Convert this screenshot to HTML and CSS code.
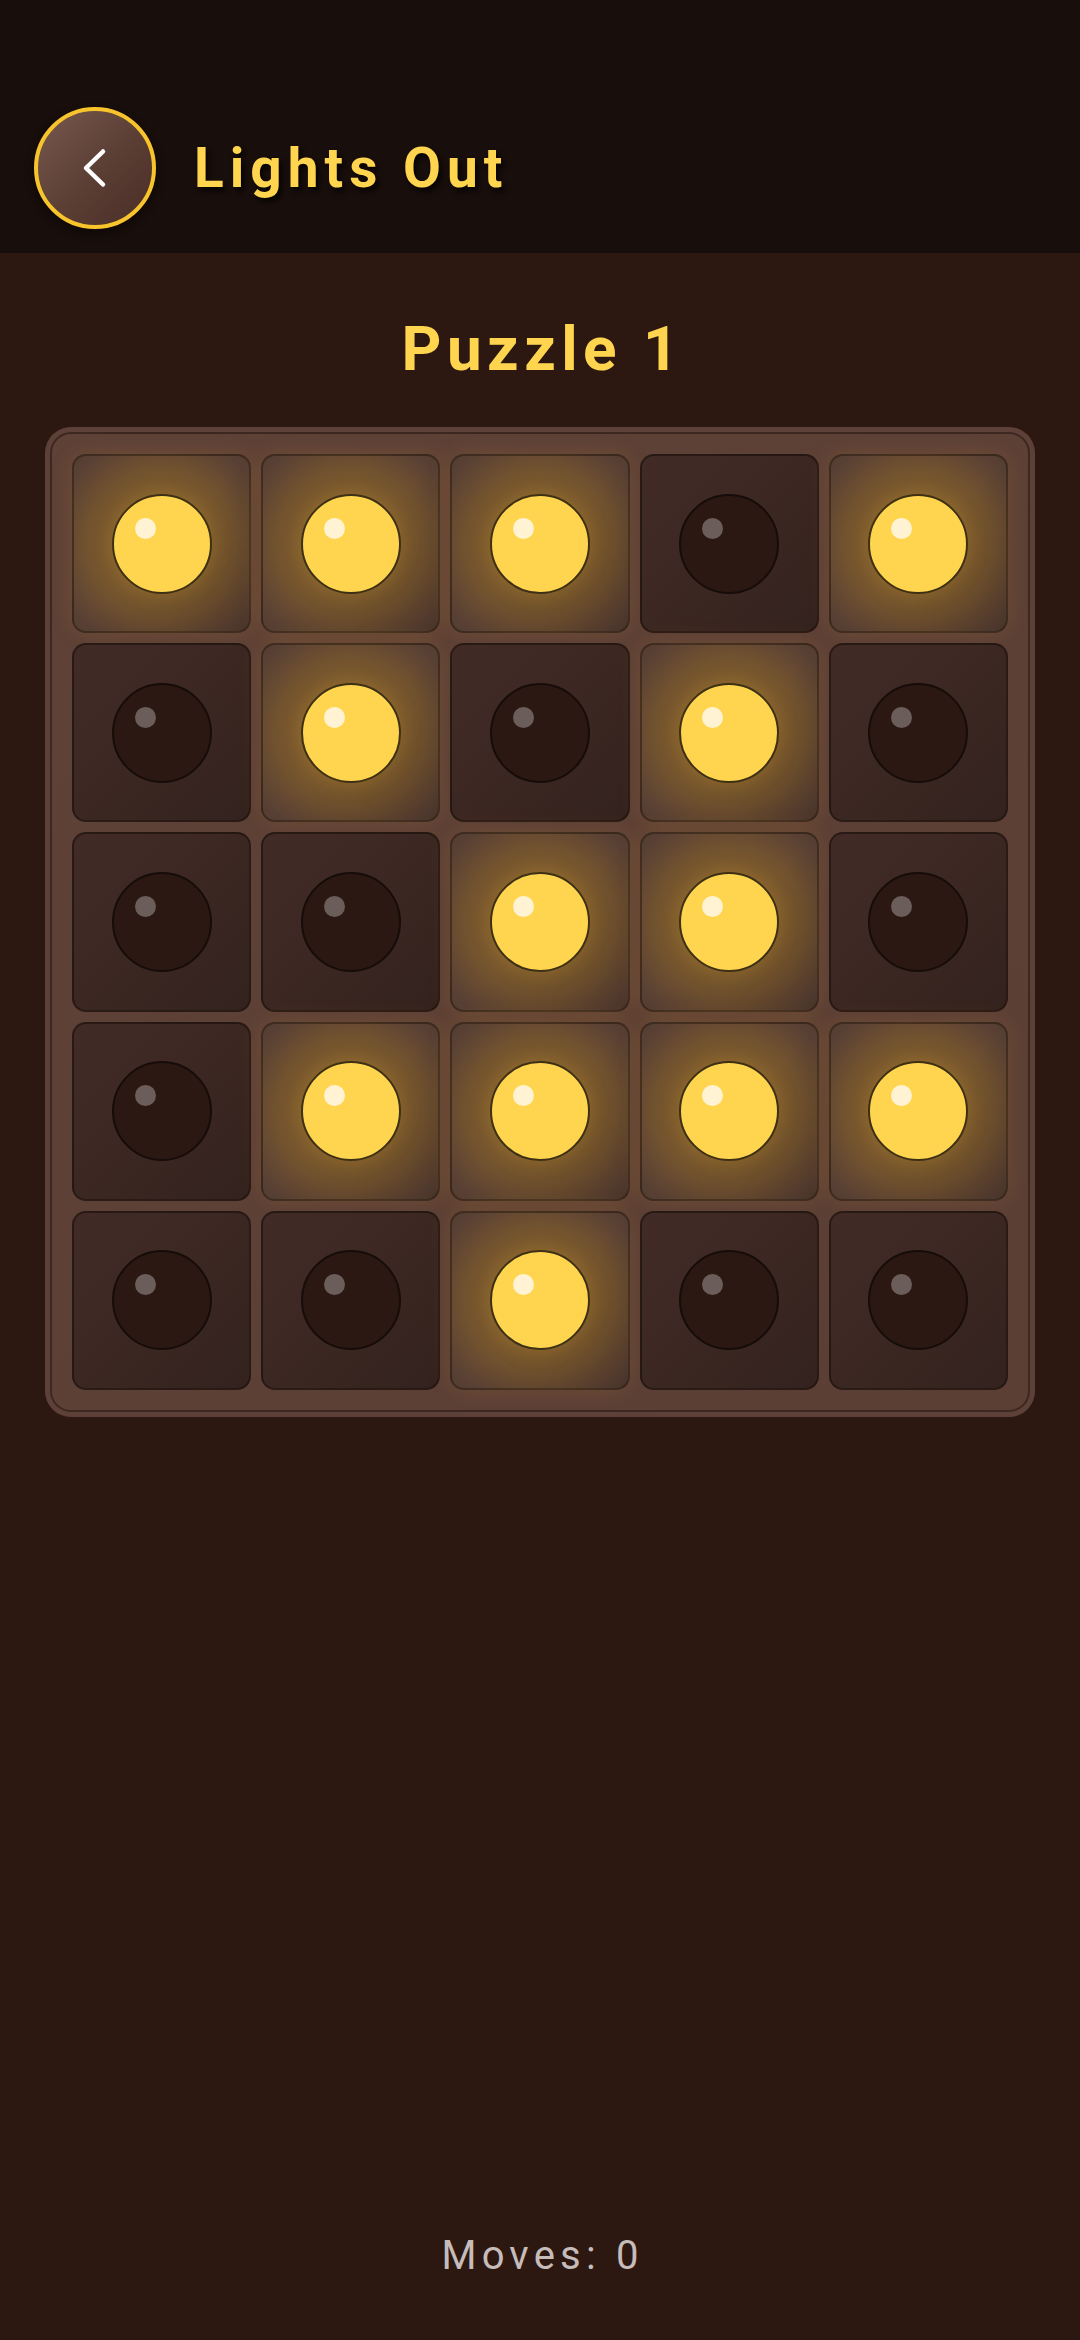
FILE: index.html
```html
<!DOCTYPE html>
<html lang="en">
<head>
<meta charset="utf-8">
<title>Lights Out</title>
<link rel="stylesheet" href="styles.css">
</head>
<body>
<div class="app">
  <header class="topbar">
    <button class="back-btn" aria-label="Back">
      <svg class="back-icon" viewBox="0 0 48 48" width="48" height="48">
        <path d="M32 7.5 L15 24 L32 40.5" fill="none" stroke="#ffffff" stroke-width="4.5" stroke-linecap="round" stroke-linejoin="round"/>
      </svg>
    </button>
    <h1 class="app-title">Lights Out</h1>
  </header>

  <main class="content">
    <h2 class="puzzle-title">Puzzle 1</h2>

    <div class="board">
      <div class="board-inner">
        <div class="cell on"><span class="bulb"></span></div>
        <div class="cell on"><span class="bulb"></span></div>
        <div class="cell on"><span class="bulb"></span></div>
        <div class="cell off"><span class="bulb"></span></div>
        <div class="cell on"><span class="bulb"></span></div>

        <div class="cell off"><span class="bulb"></span></div>
        <div class="cell on"><span class="bulb"></span></div>
        <div class="cell off"><span class="bulb"></span></div>
        <div class="cell on"><span class="bulb"></span></div>
        <div class="cell off"><span class="bulb"></span></div>

        <div class="cell off"><span class="bulb"></span></div>
        <div class="cell off"><span class="bulb"></span></div>
        <div class="cell on"><span class="bulb"></span></div>
        <div class="cell on"><span class="bulb"></span></div>
        <div class="cell off"><span class="bulb"></span></div>

        <div class="cell off"><span class="bulb"></span></div>
        <div class="cell on"><span class="bulb"></span></div>
        <div class="cell on"><span class="bulb"></span></div>
        <div class="cell on"><span class="bulb"></span></div>
        <div class="cell on"><span class="bulb"></span></div>

        <div class="cell off"><span class="bulb"></span></div>
        <div class="cell off"><span class="bulb"></span></div>
        <div class="cell on"><span class="bulb"></span></div>
        <div class="cell off"><span class="bulb"></span></div>
        <div class="cell off"><span class="bulb"></span></div>
      </div>
    </div>

    <p class="moves">Moves: 0</p>
  </main>
</div>
</body>
</html>
```

FILE: styles.css
```css
* {
  box-sizing: border-box;
}

html, body {
  margin: 0;
  padding: 0;
  background: #2c1811;
}

body {
  font-family: Roboto, "Noto Sans", "Liberation Sans", sans-serif;
  width: 1080px;
  min-height: 2340px;
}

.app {
  display: flex;
  flex-direction: column;
  min-height: 2340px;
}

/* ---------- header ---------- */
.topbar {
  height: 253px;
  background: #180e0b;
  display: flex;
  align-items: center;
  padding: 107px 0 24px 34px;
  gap: 38px;
}

.back-btn {
  width: 122px;
  height: 122px;
  flex: 0 0 122px;
  border-radius: 50%;
  border: 4px solid #f8c42b;
  background: linear-gradient(135deg, #77594e 0%, #5a3d33 55%, #4a2f28 100%);
  box-shadow: 0 4px 10px rgba(0, 0, 0, 0.45);
  display: flex;
  align-items: center;
  justify-content: center;
  padding: 0;
  cursor: pointer;
}

.back-icon {
  display: block;
}

.app-title {
  margin: 0;
  font-size: 55px;
  line-height: 1;
  font-weight: 700;
  letter-spacing: 6px;
  color: #ffd54f;
  text-shadow: 3px 4px 5px rgba(0, 0, 0, 0.75);
}

/* ---------- content ---------- */
.content {
  flex: 1;
  display: flex;
  flex-direction: column;
  align-items: center;
  padding: 0 0 64px;
}

.puzzle-title {
  margin: 65px 0 0;
  font-size: 62px;
  line-height: 62px;
  font-weight: 700;
  letter-spacing: 5.5px;
  padding-left: 5.5px;
  color: #ffd54f;
}

.board {
  margin-top: 47px;
  width: 990px;
  height: 990px;
  padding: 5px;
  border-radius: 26px;
  background: #5d4037;
}

.board-inner {
  width: 100%;
  height: 100%;
  border: 2px solid #3c2821;
  border-radius: 21px;
  padding: 20px;
  display: grid;
  grid-template-columns: repeat(5, 1fr);
  grid-template-rows: repeat(5, 1fr);
  gap: 10px;
  background: linear-gradient(135deg, #5e4137 0%, #5b3f35 100%);
}

.cell {
  border-radius: 14px;
  border: 2px solid rgba(30, 18, 12, 0.45);
  display: flex;
  align-items: center;
  justify-content: center;
  position: relative;
}

.cell.off {
  background: linear-gradient(135deg, #422b26 0%, #3b2722 55%, #33221e 100%);
  border-color: rgba(25, 14, 10, 0.55);
}

.cell.on {
  background:
    linear-gradient(135deg, rgba(0, 0, 0, 0) 0%, rgba(0, 0, 0, 0) 50%, rgba(20, 8, 4, 0.16) 100%),
    radial-gradient(circle 128px at 50% 50%, #85612c 0px, #7c5a2d 52px, #72532f 74px, #654932 92px, #584034 110px, #523b31 128px);
  border-color: rgba(40, 26, 14, 0.5);
  box-shadow: 0 0 24px rgba(255, 180, 50, 0.12);
}

.bulb {
  width: 100px;
  height: 100px;
  border-radius: 50%;
  position: relative;
  display: block;
}

.bulb::after {
  content: "";
  position: absolute;
  left: 21px;
  top: 22px;
  width: 21px;
  height: 21px;
  border-radius: 50%;
}

.cell.on .bulb {
  background: #ffd54f;
  border: 2px solid #3d3015;
  box-shadow: 0 0 22px rgba(255, 190, 50, 0.18);
}

.cell.on .bulb::after {
  background: #fff3d4;
}

.cell.off .bulb {
  background: #2c1812;
  border: 2.5px solid #160c09;
}

.cell.off .bulb::after {
  background: rgba(255, 255, 255, 0.3);
}

.moves {
  margin: auto 0 0;
  font-size: 40px;
  line-height: 40px;
  letter-spacing: 5.2px;
  padding-left: 5.2px;
  color: #c6bcb9;
}
```
